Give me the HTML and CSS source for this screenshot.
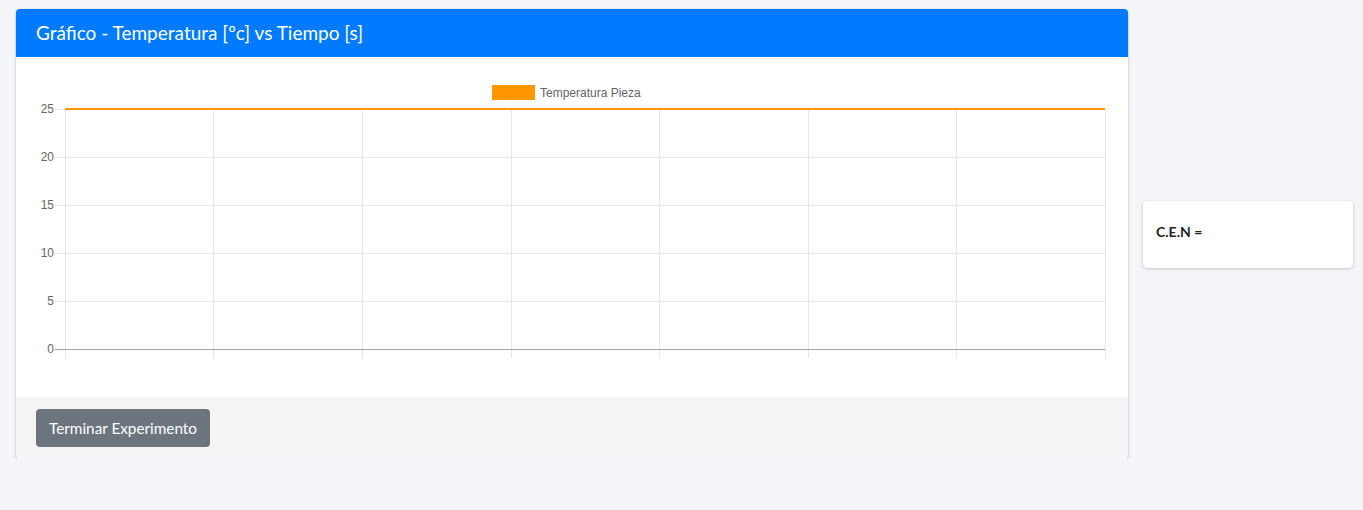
FILE: index.html
```html
<!DOCTYPE html>
<html lang="es">
<head>
<meta charset="utf-8">
<link rel="stylesheet" href="styles.css">
</head>
<body>
<div class="page">
  <div class="card main">
    <div class="card-header">Gráfico - Temperatura [ºc] vs Tiempo [s]</div>
    <div class="card-body">
      <svg class="chart" width="1112" height="340" viewBox="0 0 1112 340">
        <g class="grid" stroke="#e6e6e6" stroke-width="1">
          <line x1="39" y1="100.5" x2="1089" y2="100.5"/>
          <line x1="39" y1="148.5" x2="1089" y2="148.5"/>
          <line x1="39" y1="196.5" x2="1089" y2="196.5"/>
          <line x1="39" y1="244.5" x2="1089" y2="244.5"/>
          <line x1="39" y1="52.5" x2="49" y2="52.5"/>
          <line x1="49.5" y1="52" x2="49.5" y2="301"/>
          <line x1="197.5" y1="52" x2="197.5" y2="301"/>
          <line x1="346.5" y1="52" x2="346.5" y2="301"/>
          <line x1="495.5" y1="52" x2="495.5" y2="301"/>
          <line x1="643.5" y1="52" x2="643.5" y2="301"/>
          <line x1="792.5" y1="52" x2="792.5" y2="301"/>
          <line x1="940.5" y1="52" x2="940.5" y2="301"/>
          <line x1="1089.5" y1="52" x2="1089.5" y2="301"/>
        </g>
        <line x1="39" y1="292.5" x2="1089" y2="292.5" stroke="#a0a0a0" stroke-width="1"/>
        <line x1="49" y1="52" x2="1089" y2="52" stroke="#ff9800" stroke-width="2"/>
        <g class="ticks" font-family="Liberation Sans, Arial, sans-serif" font-size="12" fill="#666" text-anchor="end">
          <text x="38" y="56">25</text>
          <text x="38" y="104">20</text>
          <text x="38" y="152">15</text>
          <text x="38" y="200">10</text>
          <text x="38" y="248">5</text>
          <text x="38" y="296">0</text>
        </g>
        <rect x="476" y="28" width="43" height="15" fill="#ff9800"/>
        <text x="524" y="40" font-family="Liberation Sans, Arial, sans-serif" font-size="12" fill="#666">Temperatura Pieza</text>
      </svg>
    </div>
    <div class="card-footer">
      <button class="btn">Terminar Experimento</button>
    </div>
  </div>
  <div class="card side">
    <div class="side-body">C.E.N =</div>
  </div>
</div>
</body>
</html>
```
FILE: styles.css
```css
* { box-sizing: border-box; }
html, body {
  margin: 0;
  background: #f4f5f9;
  font-family: "Lato", "Noto Sans", sans-serif;
}
.page {
  display: flex;
  align-items: center;
  gap: 15px;
  padding: 9px 10px 0 16px;
}
.card {
  background: #fff;
  border-radius: 4px;
  box-shadow: 0 0 1px rgba(0,0,0,.125), 0 1px 3px rgba(0,0,0,.2);
  overflow: hidden;
}
.main {
  width: 1112px;
  flex: none;
}
.card-header {
  background: #007bff;
  color: #fff;
  height: 48px;
  padding: 0 20px;
  font-size: 19px;
  line-height: 48px;
}
.card-body {
  height: 340px;
  background: #fff;
}
.chart { display: block; }
.card-footer {
  background: #f5f5f5;
  height: 62px;
  padding: 12px 20px;
}
.btn {
  display: block;
  height: 38px;
  width: 174px;
  padding: 0;
  background: #6c757d;
  border: 0;
  border-radius: 4px;
  color: #fff;
  font-family: inherit;
  font-size: 15.3px;
}
.side {
  flex: 1;
  height: 67px;
}
.side-body {
  padding: 22px 13px;
  font-size: 14px;
  font-weight: 700;
  color: #212529;
}
```
